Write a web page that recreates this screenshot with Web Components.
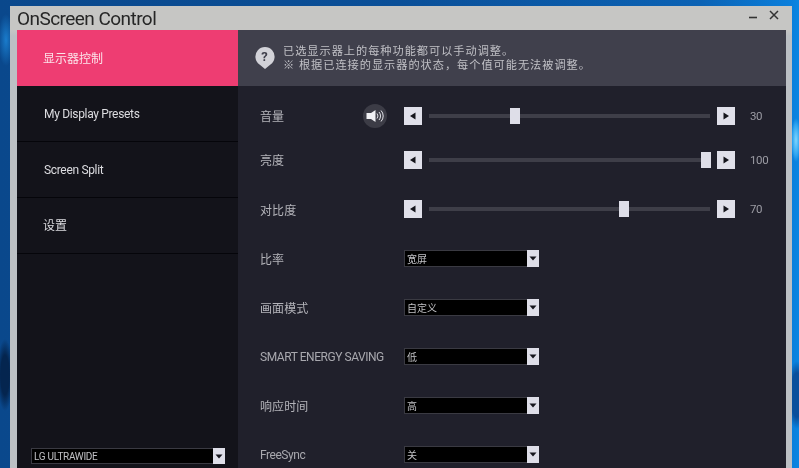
<!DOCTYPE html>
<html>
<head>
<meta charset="utf-8">
<title>OnScreen Control</title>
<style>
  html, body { margin: 0; height: 100%; overflow: hidden; }
  body {
    width: 799px; height: 468px;
    background:
      radial-gradient(ellipse 5px 22px at 796px 140px, #7fd6ff 0, #2ea4f0 70%, transparent 100%),
      radial-gradient(ellipse 10px 34px at 797px 395px, #0a4f9c 0, #0a4f9c 65%, transparent 100%),
      radial-gradient(ellipse 8px 26px at 6px 40px, #1a7ccc 0, transparent 100%),
      radial-gradient(ellipse 8px 36px at 5px 375px, #04254f 0, #04254f 55%, transparent 100%),
      linear-gradient(90deg, #0a488c 0, #0a4f98 400px, #0b62b4 700px, #0a7fdc 792px, #0a86e2 799px);
    font-family: Roboto, "Noto Sans CJK SC", sans-serif;
  }
</style>
</head>
<body>
<osc-window>
  <osc-sidebar slot="side">
    <osc-nav active>显示器控制</osc-nav>
    <osc-nav latin>My Display Presets</osc-nav>
    <osc-nav latin>Screen Split</osc-nav>
    <osc-nav>设置</osc-nav>
    <osc-select slot="foot" wide>LG ULTRAWIDE</osc-select>
  </osc-sidebar>
  <osc-notice slot="head">
    <span>已选显示器上的每种功能都可以手动调整。</span>
    <span>※ 根据已连接的显示器的状态，每个值可能无法被调整。</span>
  </osc-notice>
  <osc-row label="音量" speaker><osc-slider value="30"></osc-slider></osc-row>
  <osc-row label="亮度" tight><osc-slider value="100"></osc-slider></osc-row>
  <osc-row label="对比度"><osc-slider value="70"></osc-slider></osc-row>
  <osc-row label="比率"><osc-select>宽屏</osc-select></osc-row>
  <osc-row label="画面模式"><osc-select>自定义</osc-select></osc-row>
  <osc-row label="SMART ENERGY SAVING" latin><osc-select>低</osc-select></osc-row>
  <osc-row label="响应时间"><osc-select>高</osc-select></osc-row>
  <osc-row label="FreeSync" latin><osc-select>关</osc-select></osc-row>
</osc-window>

<script>
class OscWindow extends HTMLElement {
  constructor() {
    super();
    const shadow = this.attachShadow({ mode: 'open' });
    shadow.innerHTML = `
      <style>
        :host {
          display: flex; flex-direction: column;
          box-sizing: border-box;
          width: 782px; height: 468px;
          margin: 6px 0 0 10px;
          background: linear-gradient(180deg, #c6c6c4 0, #c6c6c4 24px, #bcc0c4 30px);
          padding: 0 6px 0 7px;
          color: #222;
          filter: blur(.35px);
        }
        .bar { height: 24px; flex: none; display: flex; align-items: center; position: relative; }
        .title { font-size: 19px; letter-spacing: -.55px; color: #262626; padding-top: 1px; }
        .ctl { margin-left: auto; display: flex; gap: 11px; padding: 0 7px 6px 0; }
        .ctl svg { display: block; }
        .body { flex: 1; display: flex; min-height: 0; }
        .main { width: 548px; display: flex; flex-direction: column; background: #20202b; }
        .rows { display: flex; flex-direction: column; gap: 19px; padding-top: 15px; }
      </style>
      <div class="bar">
        <div class="title">OnScreen Control</div>
        <div class="ctl">
          <svg width="10" height="10" viewBox="0 0 10 10"><path d="M1 7.5h8" stroke="#333" stroke-width="1.6"/></svg>
          <svg width="10" height="10" viewBox="0 0 10 10"><path d="M1 1l8 8M9 1l-8 8" stroke="#333" stroke-width="1.5"/></svg>
        </div>
      </div>
      <div class="body">
        <slot name="side"></slot>
        <div class="main">
          <slot name="head"></slot>
          <div class="rows"><slot></slot></div>
        </div>
      </div>`;
  }
}

class OscSidebar extends HTMLElement {
  constructor() {
    super();
    const shadow = this.attachShadow({ mode: 'open' });
    shadow.innerHTML = `
      <style>
        :host { display: flex; flex-direction: column; width: 221px; flex: none; background: #13131a; }
        .foot { margin-top: auto; padding: 0 13px 10px 14px; display: flex; }
      </style>
      <slot></slot>
      <div class="foot"><slot name="foot"></slot></div>`;
  }
}

class OscNav extends HTMLElement {
  constructor() {
    super();
    const shadow = this.attachShadow({ mode: 'open' });
    shadow.innerHTML = `
      <style>
        :host {
          display: flex; align-items: center;
          box-sizing: border-box; height: 56px;
          padding: 0 0 2px 26px;
          font-size: 12px; color: #dcdce0;
          border-bottom: 1px solid #05050a;
        }
        :host([latin]) { letter-spacing: -.33px; padding: 0 0 0 27px; }
        :host([active]) { background: #ee3d72; color: #fbe4ea; border-bottom: 0; }
      </style>
      <slot></slot>`;
  }
}

class OscNotice extends HTMLElement {
  constructor() {
    super();
    const shadow = this.attachShadow({ mode: 'open' });
    shadow.innerHTML = `
      <style>
        :host {
          display: flex; align-items: center; gap: 8px;
          box-sizing: border-box; height: 56px; flex: none;
          padding: 0 0 0 17px;
          background: #40404c; color: #c0c0c6;
          font-size: 11.2px; line-height: 14px;
          letter-spacing: .98px;
        }
        svg { flex: none; display: block; }
        .txt { display: flex; flex-direction: column; padding-top: 1px; }
      </style>
      <svg width="20" height="24" viewBox="0 0 20 24">
        <path d="M10 23 L4.5 18.4 A9.6 9.6 0 1 1 15.5 18.4 Z" fill="#d2d2d8"/>
        <text x="10" y="15" text-anchor="middle" font-size="13" font-weight="700" font-family="Roboto, sans-serif" fill="#40404c">?</text>
      </svg>
      <div class="txt"><slot></slot></div>`;
  }
  connectedCallback() {
    for (const s of this.querySelectorAll('span')) s.style.display = 'block';
  }
}

class OscRow extends HTMLElement {
  constructor() {
    super();
    const shadow = this.attachShadow({ mode: 'open' });
    shadow.innerHTML = `
      <style>
        :host {
          display: flex; align-items: center;
          height: 30px; padding-left: 22px;
          position: relative;
          font-size: 12px; color: #b4b4ba;
        }
        :host([tight]) { margin-top: -5px; }
        .label { width: 144px; flex: none; white-space: nowrap; letter-spacing: .1px; }
        :host([speaker]) .label, :host([tight]) .label { padding-bottom: 2px; }
        :host([latin]) .label { letter-spacing: -.45px; padding-top: 2px; color: #a8a8ae; }
        .spk { position: absolute; left: 125px; top: 3px; }
      </style>
      <div class="label"></div>
      <slot></slot>`;
    shadow.querySelector('.label').textContent = this.getAttribute('label');
    if (this.hasAttribute('speaker')) {
      const tpl = document.createElement('template');
      tpl.innerHTML = `<svg class="spk" width="24" height="24" viewBox="0 0 24 24">
        <circle cx="12" cy="12" r="12" fill="#3c3c46"/>
        <path d="M3.5 9h4.5l4.500-3v12l-4.500-3H3.500z" fill="#f0f0f4"/>
        <path d="M14 9.500a4 4 0 0 1 0 5M16 8a6 6 0 0 1 0 8M18 6.500a8 8 0 0 1 0 11" fill="none" stroke="#e4e4ea" stroke-width="1"/>
      </svg>`;
      shadow.appendChild(tpl.content);
    }
  }
}

class OscSlider extends HTMLElement {
  constructor() {
    super();
    const shadow = this.attachShadow({ mode: 'open' });
    const v = Number(this.getAttribute('value'));
    shadow.innerHTML = `
      <style>
        :host { display: flex; align-items: center; font-size: 11.5px; letter-spacing: -.4px; color: #9c9ca4; }
        .btn { width: 18px; height: 18px; background: #e0e0ea; display: flex; align-items: center; justify-content: center; flex: none; }
        .track { width: 281px; height: 4px; margin: 0 7px; background: #3e3e48; position: relative; }
        .thumb { position: absolute; top: -6px; width: 10px; height: 16px; margin-left: -5px; background: #dedee8; }
        .val { margin-left: 15px; }
      </style>
      <div class="btn"><svg width="8" height="8" viewBox="0 0 8 8"><path d="M6.500 0.500v7L1 4z" fill="#15151c"/></svg></div>
      <div class="track"><div class="thumb" style="left:${v * 2.73 + 3.8}px"></div></div>
      <div class="btn"><svg width="8" height="8" viewBox="0 0 8 8"><path d="M1.500 0.500v7L7 4z" fill="#15151c"/></svg></div>
      <div class="val">${v}</div>`;
  }
}

class OscSelect extends HTMLElement {
  constructor() {
    super();
    const shadow = this.attachShadow({ mode: 'open' });
    shadow.innerHTML = `
      <style>
        :host {
          display: flex; align-items: stretch;
          box-sizing: border-box; width: 135px; height: 17px;
          background: #000; border: 1px solid #3a3a42; border-right: 0;
          font-size: 10px; color: #c0c0c4;
        }
        :host([wide]) { width: 194px; height: 16px; flex: 1; font-size: 10px; letter-spacing: -.3px; }
        .txt { flex: 1; padding-left: 2px; display: flex; align-items: center; white-space: nowrap; }
        .arrow { width: 12px; background: #dedee8; display: flex; align-items: center; justify-content: center; margin: -1px 0; }
      </style>
      <div class="txt"><slot></slot></div>
      <div class="arrow"><svg width="8" height="5" viewBox="0 0 8 5"><path d="M0.500 0.500h7L4 4.500z" fill="#15151c"/></svg></div>`;
  }
}

customElements.define('osc-window', OscWindow);
customElements.define('osc-sidebar', OscSidebar);
customElements.define('osc-nav', OscNav);
customElements.define('osc-notice', OscNotice);
customElements.define('osc-row', OscRow);
customElements.define('osc-slider', OscSlider);
customElements.define('osc-select', OscSelect);
</script>
</body>
</html>
